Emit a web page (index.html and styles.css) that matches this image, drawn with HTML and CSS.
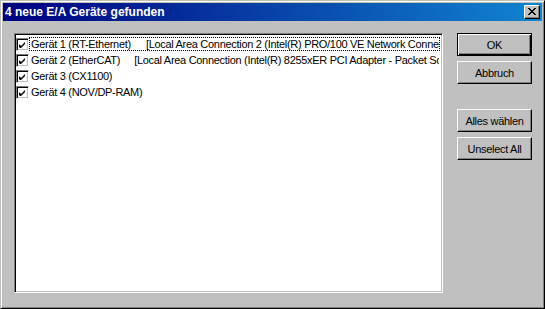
FILE: index.html
```html
<!DOCTYPE html>
<html>
<head>
<meta charset="utf-8">
<link rel="stylesheet" href="styles.css">
</head>
<body>
<div class="window">
  <div class="titlebar">
    <span class="title">4 neue E/A Geräte gefunden</span>
    <span class="close"><svg width="8" height="7" viewBox="0 0 8 7"><path d="M0 0h2v1h1v1h2v-1h1v-1h2v1h-1v1h-1v1h-1v1h1v1h1v1h1v1h-2v-1h-1v-1h-2v1h-1v1h-2v-1h1v-1h1v-1h1v-1h-1v-1h-1v-1h-1z" fill="#000"/></svg></span>
  </div>
  <div class="body">
    <div class="listbox">
      <div class="row focus"><span class="cb"><svg width="7" height="7" viewBox="0 0 7 7"><path d="M6 0v3l-4 4h-1l-1-1v-3l1 1 1 1 4-4z" fill="#000"/></svg></span><span class="txt">Gerät 1 (RT-Ethernet)<span class="info">[Local Area Connection 2 (Intel(R) PRO/100 VE Network Connection - Packet Scheduler Miniport)]</span></span></div>
      <div class="row"><span class="cb"><svg width="7" height="7" viewBox="0 0 7 7"><path d="M6 0v3l-4 4h-1l-1-1v-3l1 1 1 1 4-4z" fill="#000"/></svg></span><span class="txt">Gerät 2 (EtherCAT)<span class="info2">[Local Area Connection (Intel(R) 8255xER PCI Adapter - Packet Scheduler Miniport)]</span></span></div>
      <div class="row"><span class="cb"><svg width="7" height="7" viewBox="0 0 7 7"><path d="M6 0v3l-4 4h-1l-1-1v-3l1 1 1 1 4-4z" fill="#000"/></svg></span><span class="txt">Gerät 3 (CX1100)</span></div>
      <div class="row"><span class="cb"><svg width="7" height="7" viewBox="0 0 7 7"><path d="M6 0v3l-4 4h-1l-1-1v-3l1 1 1 1 4-4z" fill="#000"/></svg></span><span class="txt">Gerät 4 (NOV/DP-RAM)</span></div>
    </div>
    <div class="buttons">
      <div class="btn default"><span>OK</span></div>
      <div class="btn"><span>Abbruch</span></div>
      <div class="btn sep"><span>Alles wählen</span></div>
      <div class="btn"><span>Unselect All</span></div>
    </div>
  </div>
</div>
</body>
</html>
```

FILE: styles.css
```css
html, body {
  margin: 0;
  padding: 0;
  background: #c0c0c0;
}
.window {
  width: 545px;
  height: 309px;
  box-sizing: border-box;
  background: #c0c0c0;
  border-style: solid;
  border-width: 1px;
  border-color: #c0c0c0 #000 #000 #c0c0c0;
  box-shadow: inset 1px 1px 0 #fff, inset -1px -1px 0 #808080;
  padding: 2px;
  display: flex;
  flex-direction: column;
  font-family: "Liberation Sans", Arial, sans-serif;
  font-size: 11px;
  letter-spacing: -0.3px;
  color: #000;
}
.titlebar {
  height: 18px;
  background: linear-gradient(to right, #000080, #1084d0);
  display: flex;
  align-items: center;
  justify-content: space-between;
  padding: 0 2px 0 2px;
}
.title {
  color: #fff;
  font-family: "Liberation Sans", Arial, sans-serif;
  font-weight: bold;
  font-size: 12px;
  letter-spacing: 0;
}
.close {
  width: 16px;
  height: 14px;
  box-sizing: border-box;
  background: #c0c0c0;
  border-style: solid;
  border-width: 1px;
  border-color: #fff #000 #000 #fff;
  box-shadow: inset -1px -1px 0 #808080;
  display: flex;
  align-items: center;
  justify-content: center;
  padding: 0 1px 1px 0;
}
.close svg { display: block; }
.body {
  display: flex;
  padding: 12px 0 0 11px;
  gap: 14px;
}
.listbox {
  width: 429px;
  height: 260px;
  box-sizing: border-box;
  background: #fff;
  border-style: solid;
  border-width: 1px;
  border-color: #808080 #fff #fff #808080;
  box-shadow: inset 1px 1px 0 #000, inset -1px -1px 0 #c0c0c0;
  padding: 2px 2px 0 1px;
  overflow: hidden;
}
.row {
  display: flex;
  align-items: center;
  height: 16px;
  white-space: nowrap;
  overflow: hidden;
}
.cb {
  flex: none;
  width: 13px;
  height: 13px;
  box-sizing: border-box;
  background: #fff;
  border-style: solid;
  border-width: 1px;
  border-color: #808080 #fff #fff #808080;
  box-shadow: inset 1px 1px 0 #000, inset -1px -1px 0 #c0c0c0;
  display: flex;
  align-items: center;
  justify-content: center;
}
.cb svg { display: block; }
.txt {
  flex: 1;
  padding: 0 0 0 1px;
  height: 14px;
  box-sizing: border-box;
  line-height: 12px;
  overflow: hidden;
  border: 1px dotted transparent;
}
.focus .txt {
  border: 1px dotted #000;
}
.info { margin-left: 15px; }
.info2 { margin-left: 14px; }
.buttons {
  display: flex;
  flex-direction: column;
  gap: 5px;
}
.btn {
  width: 75px;
  height: 23px;
  box-sizing: border-box;
  background: #c0c0c0;
  border-style: solid;
  border-width: 1px;
  border-color: #fff #000 #000 #fff;
  box-shadow: inset -1px -1px 0 #808080;
  display: flex;
  align-items: center;
  justify-content: center;
}
.btn.default {
  border-color: #000;
  box-shadow: inset 1px 1px 0 #fff, inset -1px -1px 0 #000, inset -2px -2px 0 #808080;
}
.btn.sep { margin-top: 20px; }
```
